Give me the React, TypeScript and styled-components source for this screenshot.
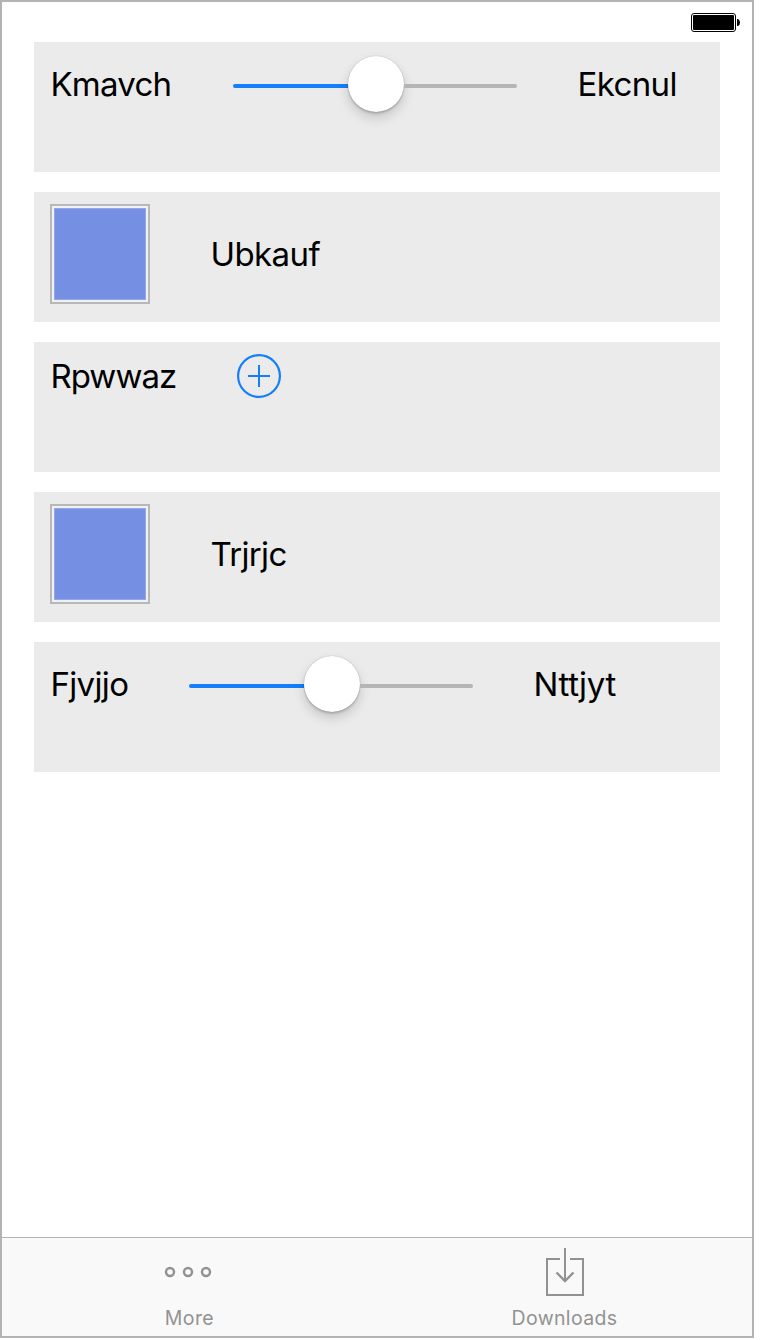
import React from 'react';
import styled, { createGlobalStyle } from 'styled-components';

const GlobalStyle = createGlobalStyle`
  * { box-sizing: border-box; }
  body { margin: 0; background: #fff; font-family: Inter, "Liberation Sans", sans-serif; }
`;

const Screen = styled.div`
  display: flex;
  flex-direction: column;
  width: 754px;
  height: 1338px;
  border: 2px solid #b3b3b3;
  background: #fff;
`;

const StatusBar = styled.header`
  display: flex;
  justify-content: flex-end;
  height: 40px;
  padding: 11px 11px 0 0;
`;

const List = styled.main`
  display: flex;
  flex: 1;
  flex-direction: column;
  gap: 20px;
  padding: 0 32px;
`;

const Row = styled.section`
  display: flex;
  align-items: flex-start;
  height: 130px;
  padding: 12px 16px;
  background: #ebebeb;
`;

const RowContent = styled.div`
  display: flex;
  align-items: center;
  gap: 60px;
`;

const Label = styled.span<{ $width: number; $spacing: number }>`
  width: ${(p) => p.$width}px;
  padding-left: 0.4px;
  color: #000;
  font-size: 33px;
  line-height: 40px;
  letter-spacing: ${(p) => p.$spacing}px;
  white-space: nowrap;
`;

const Track = styled.div`
  display: flex;
  align-items: center;
  width: 284px;
  height: 60px;
`;

const TrackPart = styled.div<{ $color: string; $side: 'left' | 'right' }>`
  width: ${(p) => (p.$side === 'left' ? 115 : 113)}px;
  height: 4px;
  margin-top: 4px;
  border-radius: ${(p) => (p.$side === 'left' ? '2px 0 0 2px' : '0 2px 2px 0')};
  background: ${(p) => p.$color};
`;

const Thumb = styled.div`
  width: 56px;
  height: 56px;
  border-radius: 50%;
  background: #fff;
  box-shadow: 0 0 1px rgba(0, 0, 0, 0.35), 0 2px 2px rgba(0, 0, 0, 0.15), 0 6px 12px rgba(0, 0, 0, 0.16);
`;

const Swatch = styled.div`
  width: 100px;
  height: 100px;
  padding: 2px;
  border: 2px solid #b8b8b8;
  background: #f0f1f6;
`;

const SwatchFill = styled.div`
  height: 100%;
  border: 1px solid #94a7e8;
  background: #758fe2;
`;

const Icon = styled.svg`
  display: block;
  flex: none;
  overflow: visible;
`;

const TabBar = styled.nav`
  display: flex;
  height: 99px;
  border-top: 1px solid #b2b2b2;
  background: #f9f9f9;
`;

const Tab = styled.div`
  display: flex;
  flex: 1;
  flex-direction: column;
  align-items: center;
  padding-top: 10px;
  color: #929292;
`;

const TabLabel = styled.span<{ $spacing: number }>`
  margin-top: 10px;
  font-size: 19.5px;
  line-height: 24px;
  letter-spacing: ${(p) => p.$spacing}px;
`;

const Slider = () => (
  <Track>
    <TrackPart $color="#147efb" $side="left" />
    <Thumb />
    <TrackPart $color="#b5b5b5" $side="right" />
  </Track>
);

const ColorSwatch = () => (
  <Swatch>
    <SwatchFill />
  </Swatch>
);

export default function App() {
  return (
    <>
      <GlobalStyle />
      <Screen>
        <StatusBar>
          <Icon width="50" height="19" viewBox="0 0 50 19">
            <rect x="0.5" y="0.5" width="44" height="18" rx="2.5" fill="#fff" stroke="#000" />
            <rect x="2" y="2" width="41" height="15" rx="1" fill="#000" />
            <path d="M46 6h1q2 1 2 3.5t-2 3.5h-1z" fill="#000" />
          </Icon>
        </StatusBar>
        <List>
          <Row>
            <RowContent>
              <Label $width={123} $spacing={-0.75}>Kmavch</Label>
              <Slider />
              <Label $width={102} $spacing={-0.6}>Ekcnul</Label>
            </RowContent>
          </Row>
          <Row>
            <RowContent>
              <ColorSwatch />
              <Label $width={112} $spacing={-0.55}>Ubkauf</Label>
            </RowContent>
          </Row>
          <Row>
            <RowContent>
              <Label $width={127} $spacing={-0.95}>Rpwwaz</Label>
              <Icon width="44" height="44" viewBox="0 0 44 44" fill="none" stroke="#147efb" strokeWidth="2">
                <circle cx="22" cy="22" r="20.9" strokeWidth="2.2" />
                <path d="M22 11v22M11 22h22" />
              </Icon>
            </RowContent>
          </Row>
          <Row>
            <RowContent>
              <ColorSwatch />
              <Label $width={78} $spacing={-0.65}>Trjrjc</Label>
            </RowContent>
          </Row>
          <Row>
            <RowContent>
              <Label $width={79} $spacing={-0.65}>Fjvjjo</Label>
              <Slider />
              <Label $width={85} $spacing={-0.25}>Nttjyt</Label>
            </RowContent>
          </Row>
        </List>
        <TabBar>
          <Tab>
            <Icon width="50" height="48" viewBox="0 0 50 48" fill="none" stroke="currentColor" strokeWidth="2.4">
              <circle cx="5" cy="24" r="4" />
              <circle cx="23" cy="24" r="4" />
              <circle cx="41" cy="24" r="4" />
            </Icon>
            <TabLabel $spacing={0.4}>More</TabLabel>
          </Tab>
          <Tab>
            <Icon width="38" height="48" viewBox="0 0 38 48" fill="none" stroke="currentColor" strokeWidth="2">
              <path d="M14 11H1v36h36V11H24M19 0v33" />
              <path d="M10.5 24.5l8.5 8.5 8.5-8.5" strokeWidth="2.4" />
            </Icon>
            <TabLabel $spacing={0.35}>Downloads</TabLabel>
          </Tab>
        </TabBar>
      </Screen>
    </>
  );
}
